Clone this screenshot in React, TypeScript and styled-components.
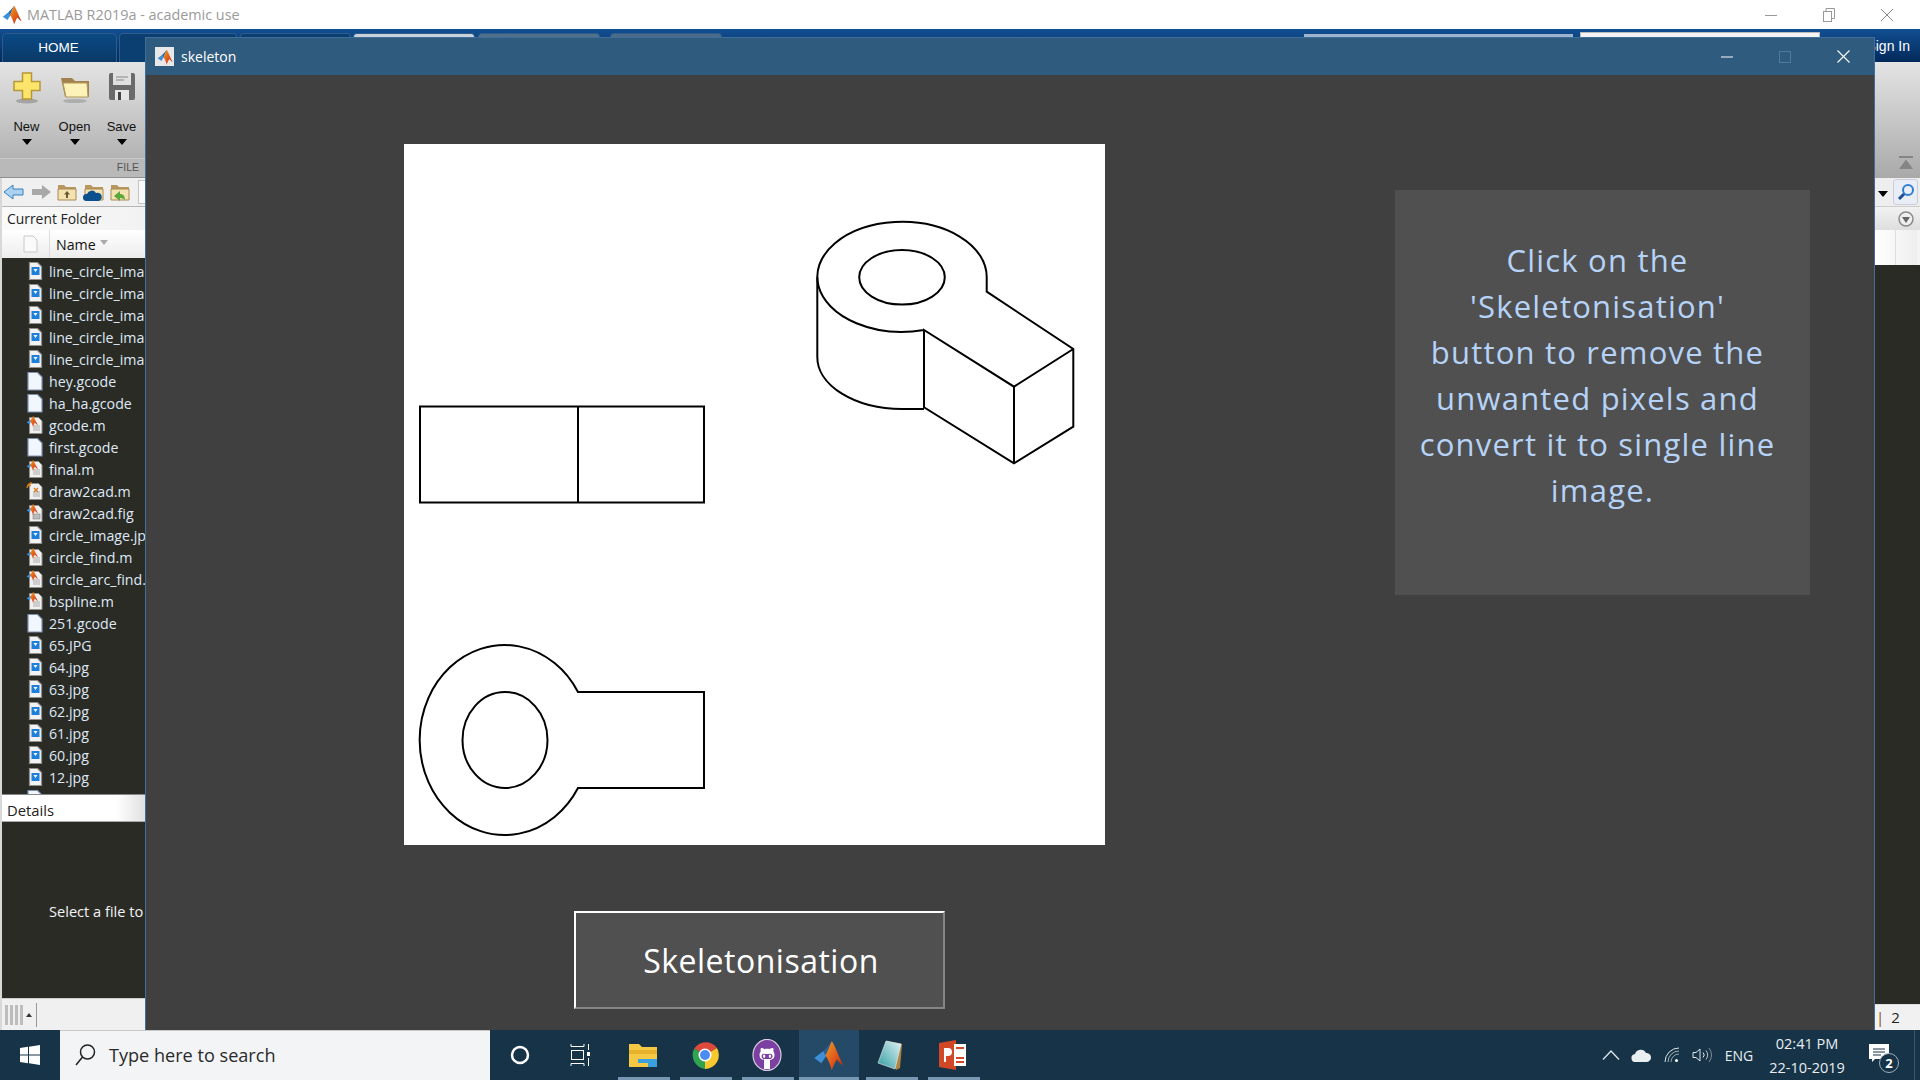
import React from "react";
import styled, { createGlobalStyle } from "styled-components";
import { FaGithubAlt } from "react-icons/fa";

const Global = createGlobalStyle`
  html, body { margin: 0; padding: 0; background: #fff; overflow: hidden; }
  * { box-sizing: border-box; }
`;
const ui = `"Open Sans", "Noto Sans", sans-serif`;
const arial = `"Liberation Sans", Arial, sans-serif`;
const comic = `"Open Sans", "DejaVu Sans", sans-serif`;

const Desktop = styled.div`position: relative; width: 1920px; height: 1080px; overflow: hidden; display: flex; flex-direction: column;`;
const MatlabWindow = styled.div`height: 1030px; display: flex; flex-direction: column; background: #f0f0f0;`;
const TitleBar = styled.div`height: 29px; background: #fff; display: flex; align-items: center; padding: 0 4px 0 2px; font: 14.4px ${ui}; color: #9a9a9a;`;
const TitleText = styled.span`margin-left: 5px; flex: 1; margin-top: -1px;`;
const Ctl = styled.div`width: 58px; height: 29px; display: flex; align-items: center; justify-content: center;`;
const TabStrip = styled.div`height: 33px; background: linear-gradient(#124f92, #03295a); display: flex; align-items: flex-end; padding-left: 2px; overflow: hidden;`;
const HomeTab = styled.div`width: 115px; height: 29px; border-radius: 5px 5px 0 0; background: linear-gradient(#0b4a85, #0a3966); border: 1px solid #2c5d8c; border-bottom: 0; color: #fff; font: 13.5px ${arial}; display: flex; align-items: center; justify-content: center; padding: 0 2px 2px 0;`;
const BackTab = styled.div<{ $w: number; $c: string; $ml: number }>`width: ${p => p.$w}px; margin-left: ${p => p.$ml}px; height: 29px; border-radius: 4px 4px 0 0; background: ${p => p.$c}; border: 1px solid #2c5d8c; border-bottom: 0;`;
const QuickBar = styled.div`width: 269px; margin-left: 582px; height: 28px; background: linear-gradient(#9db5cf, #86a5c4); align-self: flex-end;`;
const SearchBox = styled.div`width: 240px; margin-left: 7px; height: 30px; background: #f4f4f4; border: 1px solid #bbb; align-self: flex-end;`;
const SignIn = styled.div`flex: 1; color: #fff; font: 14px ${arial}; align-self: center; text-align: right; padding-right: 10px; padding-top: 1px;`;
const Ribbon = styled.div`height: 116px; background: linear-gradient(#e4e4e4, #a9a9a9); display: flex; justify-content: space-between;`;
const FileGroup = styled.div`width: 145px; display: flex; flex-direction: column;`;
const Tools = styled.div`height: 96px; display: flex; padding-left: 3px;`;
const Tool = styled.div<{ $nudge?: number }>`width: 48px; margin-left: ${p => p.$nudge ?? 0}px; display: flex; flex-direction: column; align-items: center; font: 13px ${arial}; color: #111;`;
const ToolIcon = styled.div`height: 36px; width: 36px; margin-top: 8px; display: flex; align-items: center; justify-content: center; flex: none;`;
const ToolLabel = styled.div`margin-top: 12px; line-height: 18px;`;
const DownArrow = styled.div`width: 0; height: 0; margin-top: 3px; border: 5px solid transparent; border-top: 6px solid #000; border-bottom: 0;`;
const GroupStrip = styled.div`height: 20px; background: #b9b9b9; border-top: 1px solid #c8c8c8; border-bottom: 1px solid #8f8f8f; text-align: right; padding-right: 6px; font: 10.5px/17px ${arial}; color: #555;`;
const Collapse = styled.div`width: 45px; padding-top: 94px; padding-left: 24px;`;
const Panes = styled.div`flex: 1; display: flex; justify-content: space-between; min-height: 0;`;
const LeftPane = styled.div`width: 145px; display: flex; flex-direction: column; border-left: 2px solid #d8d8d8; overflow: hidden;`;
const NavRow = styled.div`height: 29px; flex: none; display: flex; align-items: center; gap: 4.500px; padding-left: 1px; background: #f0f0f0; border-bottom: 1px solid #b5b5b5;`;
const AddressStub = styled.div`flex: 1; height: 24px; margin-left: 2px; background: #fafafa; border: 1px solid #c4c4c4; border-right: 0;`;
const PaneHeader = styled.div`height: 23px; flex: none; background: linear-gradient(90deg, #fafafa, #f2f2f2); font: 13.900px/23px ${ui}; color: #222; padding-left: 5px; white-space: nowrap;`;
const ColumnRow = styled.div`height: 28px; flex: none; background: linear-gradient(#fff, #ececec); display: flex; align-items: center; font: 14.200px ${ui}; color: #111; white-space: nowrap;`;
const ColCheck = styled.div`width: 48px; height: 100%; border-right: 1px solid #ddd; display: flex; align-items: center; justify-content: center; margin-right: 6px; padding-left: 10px;`;
const SortMark = styled.span`display: inline-block; margin-left: 4px; width: 0; height: 0; border: 4.500px solid transparent; border-top: 5px solid #aaa; border-bottom: 0; position: relative; top: -2px;`;
const FileList = styled.div`height: 537px; flex: none; background: #2b2b26; overflow: hidden; border-bottom: 1px solid #888; padding-top: 2px;`;
const FileRow = styled.div`height: 22px; display: flex; align-items: center; padding-left: 23px; gap: 4px; white-space: nowrap; font: 14.200px ${ui}; color: #dfe9f5;`;
const FileSlot = styled.span`flex: none; width: 20px; height: 20px; display: block;`;
const DetailsHead = styled.div`height: 27px; flex: none; background: linear-gradient(90deg, #fff 80%, #e0e0e0); border-bottom: 1px solid #aaa; font: 14.800px/27px ${ui}; color: #222; padding: 2px 0 0 5px;`;
const DetailsBody = styled.div`height: 176px; flex: none; background: #2b2b26; color: #f4f4f4; font: 14.600px ${ui}; white-space: nowrap; padding: 79px 0 0 47px;`;
const StatusLeft = styled.div`flex: 1; background: #f0f0f0; display: flex; align-items: center; padding: 0 0 0 3px; gap: 3px; border-top: 1px solid #ccc;`;
const StatusDivider = styled.div`width: 1px; height: 24px; background: #999; margin-left: 1px;`;
const RightPane = styled.div`width: 45px; display: flex; flex-direction: column;`;
const RightNav = styled.div`height: 29px; flex: none; display: flex; align-items: center; background: #eee; padding-left: 3px; gap: 5px; border-bottom: 1px solid #ccc;`;
const SearchBtn = styled.div`width: 25px; height: 26px; border: 1px solid #ccd; border-radius: 3px; background: #e8edf6; display: flex; align-items: center; justify-content: center;`;
const RightHead = styled.div`height: 23px; flex: none; background: linear-gradient(#f2f2f2, #dedede); display: flex; align-items: center; padding-left: 23px;`;
const RightCols = styled.div`height: 35px; flex: none; background: linear-gradient(90deg, #fff, #eee); border-right: 3px solid #f4f4f4; display: flex; padding-left: 20px;`;
const RightColLine = styled.div`width: 1px; background: #ddd;`;
const RightDark = styled.div`flex: 1; background: #2b2b26;`;
const RightStatus = styled.div`height: 26px; flex: none; background: #f1f1f1; border-top: 1px solid #ddd; font: 15px/25px ${ui}; color: #222; display: flex; gap: 7px; padding-left: 1px;`;
const Cursor = styled.span`color: #8a4b12;`;

const FigureWindow = styled.div`position: absolute; left: 145px; top: 37px; width: 1730px; height: 993px; display: flex; flex-direction: column; border: 1px solid #3f6f99; border-bottom: 0; background: #404040;`;
const FigureBar = styled.div`height: 37px; flex: none; background: #2f5b7e; display: flex; align-items: center; padding: 0 2px 0 9px; color: #fff; font: 14px ${ui};`;
const FigIconBox = styled.div`width: 19px; height: 19px; background: #e8e8e8; display: flex; align-items: center; justify-content: center; margin-right: 7px;`;
const FigTitle = styled.div`flex: 1; margin-top: -1px;`;
const FigCtl = styled.div`width: 58px; height: 37px; display: flex; align-items: center; justify-content: center; margin-left: 0;`;
const FigureBody = styled.div`flex: 1; display: flex; padding-left: 258px;`;
const LeftColumn = styled.div`width: 701px; display: flex; flex-direction: column; padding-top: 69px;`;
const Canvas = styled.div`width: 701px; height: 701px; background: #fff; flex: none;`;
const ActionButton = styled.button`width: 371px; height: 98px; margin: 66px 0 0 170px; background: #505050; border: 2px solid; border-color: #fff #858585 #858585 #fff; color: #fff; font: 32px ${comic}; letter-spacing: .5px; padding: 0 0 0 3px;`;
const InfoPanel = styled.div`width: 415px; height: 405px; margin: 115px 0 0 290px; background: #505050; color: #b6d3f7; font: 31px/46px ${comic}; letter-spacing: 1.200px; padding-top: 47px; text-align: center;`;
const InfoLine = styled.div<{ $shift?: boolean }>`padding-right: ${p => (p.$shift ? 10 : 0)}px; white-space: nowrap;`;

const Taskbar = styled.div`height: 50px; background: #163347; display: flex; align-items: stretch; color: #fff;`;
const StartBtn = styled.div`width: 60px; display: flex; align-items: center; justify-content: center;`;
const TaskSearch = styled.div`width: 430px; background: #f3f4f6; border-top: 1px solid #c8c8c8; display: flex; align-items: center; padding: 0 0 2px 14px; gap: 13px; font: 18.100px ${ui}; color: #2a2a2a;`;
const TaskGlyph = styled.div`width: 60px; display: flex; align-items: center; justify-content: center;`;
const TaskApps = styled.div`display: flex; gap: 10px; margin-left: 8px;`;
const TaskApp = styled.div<{ $active?: boolean }>`width: ${p => (p.$active ? 60 : 52)}px; margin: ${p => (p.$active ? "0 -3px 0 -5px" : "0")}; background: ${p => (p.$active ? "#244a68" : "transparent")}; border-bottom: 3px solid #7797b3; display: flex; align-items: center; justify-content: center; padding: 3px 2px 0 0;`;
const Tray = styled.div`margin-left: auto; display: flex; align-items: center; font-family: ${ui};`;
const TraySlot = styled.div<{ $w: number }>`width: ${p => p.$w}px; height: 100%; display: flex; align-items: center; justify-content: center;`;
const TrayText = styled.div`width: 46px; text-align: center; font-size: 14px; color: #e8eef2;`;
const Clock = styled.div`width: 80px; margin-left: 5px; text-align: center; font-size: 14.500px; line-height: 24px; color: #e8eef2; padding-top: 1px; white-space: nowrap;`;
const Notif = styled.div`position: relative; width: 52px; height: 100%; display: flex; align-items: center; justify-content: center; margin: 0 3px 0 12px; padding: 0 12px 4px 0;`;
const NotifBadge = styled.div`position: absolute; left: 20px; top: 23px; width: 20px; height: 20px; border-radius: 50%; background: #163347; border: 1px solid #9db0bd; color: #fff; font: 700 13px/18px ${ui}; text-align: center;`;
const EndLine = styled.div`width: 1px; height: 100%; background: #3c5668; margin-right: 5px;`;

const Logo = ({ s = 22 }: { s?: number }) => (
  <svg width={s} height={s} viewBox="0 0 24 24">
    <defs>
      <linearGradient id="mlPeak" x1="0" y1="0" x2="1" y2="1">
        <stop offset="0" stopColor="#e8a020" />
        <stop offset=".55" stopColor="#e0571c" />
        <stop offset="1" stopColor="#a81e10" />
      </linearGradient>
    </defs>
    <path d="M1 14 8 8.500 11 11 6.500 18Z" fill="#3d8fd8" />
    <path d="M8 8.500 11 5.500C12.500 4 13 2.500 14.500 1 13 4 11.500 9 9.500 12Z" fill="#2b5f96" />
    <path d="M14.500 1C16.500 3 19 11 23.500 19.500 21.500 18.500 19.500 16.500 18.500 15 16.500 18 15.500 21 14.500 23.500 13.500 19 11.500 14.500 9.500 12 11.500 9 13 4 14.500 1Z" fill="url(#mlPeak)" />
  </svg>
);

const PageBase = ({ fill = "#f2f2f2", stroke = "#8f8f8f" }: { fill?: string; stroke?: string }) => (
  <path d="M4.500 1.500h8l4 4v13h-12z" fill={fill} stroke={stroke} strokeWidth="1.200" />
);
const ImageFile = () => (
  <svg width="20" height="20" viewBox="0 0 20 20">
    <PageBase />
    <rect x="6.500" y="6" width="8" height="8" fill="#1d7fdc" />
    <path d="M8.500 8h4l-2 3z" fill="#fff" />
  </svg>
);
const PlainFile = () => (
  <svg width="20" height="20" viewBox="0 0 20 20">
    <path d="M3 1.500h9.500l4.500 4.500v13H3z" fill="#f2f6fd" stroke="#7f92b5" strokeWidth="1.200" />
  </svg>
);
const CodeFile = ({ kind }: { kind: "m" | "fx" | "fig" }) => (
  <svg width="20" height="20" viewBox="0 0 20 20">
    <path d="M4.500 2.500h9l3.500 3.500v12.500h-12.500z" fill="#f0f0f0" stroke="#8f8f8f" />
    {kind !== "fig" && <path d="M8 11h7M8 13h7M8 15h7" stroke="#aaa" />}
    {kind === "fig" && <rect x="8" y="11" width="7" height="5" fill="#bbb" stroke="#888" strokeWidth=".6" />}
    {kind === "fx" ? (
      <>
        <path d="M2 7q1-5 5-5M2 4.500h4" stroke="#d97a1c" strokeWidth="1.300" fill="none" />
        <path d="M9 7l4 4m0-4l-4 4" stroke="#d97a1c" strokeWidth="1.300" />
      </>
    ) : (
      <>
        <path d="M1.500 7.500 5 5l1.500 1-2 3z" fill="#3d8fd8" />
        <path d="M8 1c1 1 2.500 5 5 9-1.500-.5-2.500-1.500-3-2.500C9 9 8.500 10 8 12 7.500 9.500 6.500 7.500 5 6c1.500-1.500 2-3.500 3-5z" fill="url(#mlPeak)" />
      </>
    )}
  </svg>
);

type FileKind = "img" | "plain" | "m" | "fx" | "fig";
const files: [FileKind, string][] = [
  ["img", "line_circle_ima"], ["img", "line_circle_ima"], ["img", "line_circle_ima"],
  ["img", "line_circle_ima"], ["img", "line_circle_ima"], ["plain", "hey.gcode"],
  ["plain", "ha_ha.gcode"], ["m", "gcode.m"], ["plain", "first.gcode"], ["m", "final.m"], ["fx", "draw2cad.m"],
  ["fig", "draw2cad.fig"], ["img", "circle_image.jp"], ["m", "circle_find.m"], ["m", "circle_arc_find."],
  ["m", "bspline.m"], ["plain", "251.gcode"], ["img", "65.JPG"], ["img", "64.jpg"], ["img", "63.jpg"],
  ["img", "62.jpg"], ["img", "61.jpg"], ["img", "60.jpg"], ["img", "12.jpg"], ["plain", "7.gcode"],
];
const FileGlyph = ({ kind }: { kind: FileKind }) => {
  if (kind === "img") return <ImageFile />;
  if (kind === "plain") return <PlainFile />;
  return <CodeFile kind={kind} />;
};

const FolderSmall = ({ badge }: { badge?: "up" | "cloud" | "back" }) => (
  <svg width="22" height="22" viewBox="0 0 22 22">
    <path d="M2 4h6l2 2h10v13H2z" fill="#b9985f" />
    <path d="M2 8h18v11H2z" fill="#f4e3b0" stroke="#a88a55" />
    {badge === "up" && <path d="M11 10l-3 3.500h2V17h2v-3.500h2z" fill="#6b5a30" />}
    {badge === "cloud" && <path d="M3 20a3.500 3.500 0 0 1 1-7 5 5 0 0 1 9-1 4 4 0 0 1 3 8z" fill="#0b4f8f" />}
    {badge === "back" && <path d="M11 10l-6 5 6 5v-3c3 0 4 1 5 2 0-4-2-6-5-6z" fill="#5aa83c" />}
  </svg>
);

const Drawing = () => (
  <svg width="701" height="701" viewBox="0 -.5 701 701" fill="none" stroke="#000" strokeWidth="2">
    <rect x="16" y="262" width="284" height="96" />
    <path d="M174 262V358" />
    <path d="M174 547.500A85 95 0 1 0 174 643.500H300V547.500Z" />
    <ellipse cx="101" cy="595.500" rx="42.500" ry="48" />
    <path d="M520 185.500A84.700 55 0 1 1 582.700 132.800V147.200L669.300 204.500V282.200L610 318.800 520 262.800V185.500L610 242.200 669.300 204.500" />
    <path d="M610 242.200V318.800" />
    <path d="M413.300 132.800V212.200A84.700 52 0 0 0 498 264.500H520" />
    <ellipse cx="498" cy="132.800" rx="42.800" ry="27.300" />
  </svg>
);

export default function App() {
  return (
    <Desktop>
      <Global />
      <MatlabWindow>
        <TitleBar>
          <Logo s={20} />
          <TitleText>MATLAB R2019a - academic use</TitleText>
          <Ctl>
            <svg width="12" height="12" viewBox="0 0 12 12"><path d="M0 6.500h12" stroke="#999" /></svg>
          </Ctl>
          <Ctl>
            <svg width="12" height="14" viewBox="0 0 12 14" fill="none" stroke="#999"><rect x=".5" y="3.500" width="8" height="10" /><path d="M3 3.500V.5h8.500v10H9" /></svg>
          </Ctl>
          <Ctl>
            <svg width="14" height="14" viewBox="0 0 14 14"><path d="M1 1l12 12M13 1L1 13" stroke="#888" /></svg>
          </Ctl>
        </TitleBar>
        <TabStrip>
          <HomeTab>HOME</HomeTab>
          <BackTab $w={118} $ml={2} $c="#0b3f72" />
          <BackTab $w={111} $ml={3} $c="#0b3f72" />
          <BackTab $w={122} $ml={2} $c="#c9d2da" />
          <BackTab $w={122} $ml={3} $c="#51708c" />
          <BackTab $w={112} $ml={10} $c="#4c6b88" />
          <QuickBar />
          <SearchBox />
          <SignIn>Sign In</SignIn>
        </TabStrip>
        <Ribbon>
          <FileGroup>
            <Tools>
              <Tool>
                <ToolIcon>
                  <svg width="32" height="36" viewBox="0 0 32 36">
                    <ellipse cx="16" cy="31" rx="11" ry="2.500" fill="#777" opacity=".5" />
                    <path d="M11.500 3h9v8.500H29v9h-8.500V29h-9v-8.500H3v-9h8.500z" fill="#fbe56a" stroke="#b8963a" strokeWidth="1.500" />
                  </svg>
                </ToolIcon>
                <ToolLabel>New</ToolLabel>
                <DownArrow />
              </Tool>
              <Tool $nudge={1}>
                <ToolIcon>
                  <svg width="32" height="36" viewBox="0 0 32 36">
                    <ellipse cx="16" cy="31" rx="12" ry="2" fill="#777" opacity=".4" />
                    <path d="M2 8h11l3 3h14v16H6z" fill="#a3814f" />
                    <path d="M4 13h24l1 14H7z" fill="#fdf3b8" stroke="#b09a5c" />
                  </svg>
                </ToolIcon>
                <ToolLabel>Open</ToolLabel>
                <DownArrow />
              </Tool>
              <Tool>
                <ToolIcon>
                  <svg width="30" height="36" viewBox="0 0 30 36">
                    <rect x="2" y="3" width="26" height="27" rx="2" fill="#6a6a6a" />
                    <rect x="6" y="3" width="18" height="12" fill="#e0e0e0" />
                    <path d="M9 7h12M9 10h8" stroke="#888" />
                    <rect x="8" y="20" width="14" height="10" fill="#e6e6e6" />
                    <rect x="11" y="22" width="3" height="8" fill="#444" />
                  </svg>
                </ToolIcon>
                <ToolLabel>Save</ToolLabel>
                <DownArrow />
              </Tool>
            </Tools>
            <GroupStrip>FILE</GroupStrip>
          </FileGroup>
          <Collapse>
            <svg width="14" height="14" viewBox="0 0 14 14" fill="#858585"><rect width="14" height="2" /><path d="M7 3.500 14 13H0z" /></svg>
          </Collapse>
        </Ribbon>
        <Panes>
          <LeftPane>
            <NavRow>
              <svg width="22" height="20" viewBox="0 0 22 20"><path d="M1 10 10 3v4h10v6H10v4z" fill="#a9d2f2" stroke="#3e7fb6" /></svg>
              <svg width="22" height="20" viewBox="0 0 22 20"><path d="M21 10 12 3v4H2v6h10v4z" fill="#a8a8a8" /></svg>
              <FolderSmall badge="up" />
              <FolderSmall badge="cloud" />
              <FolderSmall badge="back" />
              <AddressStub />
            </NavRow>
            <PaneHeader>Current Folder</PaneHeader>
            <ColumnRow>
              <ColCheck>
                <svg width="15" height="18" viewBox="0 0 15 18"><path d="M1 1h9l4 4v12H1z" fill="#fafafa" stroke="#c8c8c8" /></svg>
              </ColCheck>
              Name<SortMark />
            </ColumnRow>
            <FileList>
              {files.map(([k, n], i) => (
                <FileRow key={i}>
                  <FileSlot><FileGlyph kind={k} /></FileSlot>
                  {n}
                </FileRow>
              ))}
            </FileList>
            <DetailsHead>Details</DetailsHead>
            <DetailsBody>Select a file to</DetailsBody>
            <StatusLeft>
              <svg width="18" height="20" viewBox="0 0 18 20" fill="#bdbdbd"><path d="M0 0h3v20H0zM5 0h3v20H5zM10 0h3v20h-3zM15 0h3v20h-3z" /></svg>
              <svg width="6" height="4" viewBox="0 0 6 4"><path d="M3 0l3 4H0z" fill="#333" /></svg>
              <StatusDivider />
            </StatusLeft>
          </LeftPane>
          <RightPane>
            <RightNav>
              <DownArrow />
              <SearchBtn>
                <svg width="18" height="18" viewBox="0 0 18 18" fill="none"><circle cx="11" cy="7" r="5" stroke="#2f7fd0" strokeWidth="2" /><path d="M7 11l-5 5" stroke="#1d4f9a" strokeWidth="3" /></svg>
              </SearchBtn>
            </RightNav>
            <RightHead>
              <svg width="16" height="16" viewBox="0 0 16 16"><circle cx="8" cy="8" r="7" fill="#eee" stroke="#8a8a8a" strokeWidth="1.500" /><path d="M4 6h8l-4 6z" fill="#666" /></svg>
            </RightHead>
            <RightCols><RightColLine /></RightCols>
            <RightDark />
            <RightStatus><Cursor>|</Cursor><span>2</span></RightStatus>
          </RightPane>
        </Panes>
      </MatlabWindow>
      <Taskbar>
        <StartBtn>
          <svg width="20" height="20" viewBox="0 0 20 20" fill="#fff"><path d="M0 3l8-1.200V9.500H0zM9 1.700 20 0v9.500H9zM0 10.500h8v7.700L0 17zM9 10.500h11V20L9 18.300z" /></svg>
        </StartBtn>
        <TaskSearch>
          <svg width="22" height="24" viewBox="0 0 22 24" fill="none" stroke="#222" strokeWidth="1.500"><circle cx="13.500" cy="9" r="7" /><path d="M8.500 14 2 22" /></svg>
          Type here to search
        </TaskSearch>
        <TaskGlyph>
          <svg width="20" height="20" viewBox="0 0 20 20" fill="none"><circle cx="10" cy="10" r="8" stroke="#fff" strokeWidth="2.500" /></svg>
        </TaskGlyph>
        <TaskGlyph>
          <svg width="20" height="24" viewBox="0 0 20 24" fill="none" stroke="#fff"><path d="M1 1v2.500h13V1M1 23v-2.500h13V23" /><rect x="1.500" y="7.500" width="12" height="9" /><path d="M18.500 1v6M18.500 15v8" /><rect x="17" y="9" width="3" height="4" fill="#fff" stroke="none" /></svg>
        </TaskGlyph>
        <TaskApps>
          <TaskApp>
            <svg width="30" height="26" viewBox="0 0 30 26"><path d="M1 2h10l3 3h15v20H1z" fill="#f6c944" /><path d="M1 8h28v4H1z" fill="#e8b32c" /><path d="M10 17h19v8H20v-4H10z" fill="#3aa0de" /></svg>
          </TaskApp>
          <TaskApp>
            <svg width="28" height="28" viewBox="0 0 28 28">
              <path d="M14 14 3.200 7.500A14 14 0 0 1 26 7z" fill="#dd4a3c" />
              <path d="M14 14 3.200 7.500A14 14 0 0 0 14 28z" fill="#2fa350" />
              <path d="M14 14 26 7A14 14 0 0 1 14 28z" fill="#f7c92f" />
              <circle cx="14" cy="14" r="6.500" fill="#fff" />
              <circle cx="14" cy="14" r="5" fill="#4c8bf0" />
            </svg>
          </TaskApp>
          <TaskApp>
            <svg width="30" height="32" viewBox="0 0 30 32">
              <ellipse cx="15" cy="16" rx="14" ry="15.500" fill="#7c3fa2" stroke="#d8cfe0" strokeWidth="1.200" />
              <foreignObject x="7" y="7" width="16" height="16"><FaGithubAlt size={16} color="#fff" /></foreignObject>
              <path d="M12 20h6v10h-6z" fill="#fff" />
            </svg>
          </TaskApp>
          <TaskApp $active>
            <Logo s={31} />
          </TaskApp>
          <TaskApp>
            <svg width="28" height="32" viewBox="0 0 28 32">
              <defs><linearGradient id="pad" x1="0" y1="1" x2="1" y2="0"><stop offset="0" stopColor="#2f9c9f" /><stop offset="1" stopColor="#dff3f6" /></linearGradient></defs>
              <path d="M9 2l16 3-2 24-4 2z" fill="#b08440" />
              <path d="M9 2 24 5 18 30 1 24z" fill="url(#pad)" stroke="#eee" strokeWidth=".6" />
            </svg>
          </TaskApp>
          <TaskApp>
            <svg width="28" height="32" viewBox="0 0 28 32">
              <path d="M0 4 17 1v30L0 28z" fill="#d24726" />
              <rect x="15" y="5" width="12" height="22" fill="#fff" />
              <path d="M17 9h8M17 19h8M17 23h8" stroke="#d24726" strokeWidth="2" />
              <path d="M5 23V9h4q4 0 4 4t-4 4H7v6z" fill="#fff" />
            </svg>
          </TaskApp>
        </TaskApps>
        <Tray>
          <TraySlot $w={30}>
            <svg width="18" height="10" viewBox="0 0 18 10" fill="none" stroke="#dfe7ec" strokeWidth="1.300"><path d="M1 9.500 9 1l8 8.500" /></svg>
          </TraySlot>
          <TraySlot $w={30}>
            <svg width="20" height="14" viewBox="0 0 20 14"><path d="M5 14a4 4 0 0 1-1-8 6 6 0 0 1 11-1 4.500 4.500 0 0 1 1 9z" fill="#e9eef1" /></svg>
          </TraySlot>
          <TraySlot $w={31}>
            <svg width="16" height="16" viewBox="0 0 16 16" fill="none" stroke="#dfe7ec"><path d="M1 15A14 14 0 0 1 15 1" /><path d="M4 15A11 11 0 0 1 15 4" opacity=".7" /><path d="M7 15a8 8 0 0 1 8-8" opacity=".6" /><circle cx="12.500" cy="13.500" r="1.500" fill="#fff" stroke="none" /></svg>
          </TraySlot>
          <TraySlot $w={29}>
            <svg width="20" height="16" viewBox="0 0 20 16" fill="none" stroke="#dfe7ec"><path d="M1 5.500h3L8 2v12L4 10.500H1z" /><path d="M11 5.500a3.500 3.500 0 0 1 0 5" /><path d="M14 3.500a7 7 0 0 1 0 9" opacity=".8" /><path d="M17 1a11 11 0 0 1 0 14" opacity=".5" /></svg>
          </TraySlot>
          <TrayText>ENG</TrayText>
          <Clock>02:41 PM<br />22-10-2019</Clock>
          <Notif>
            <svg width="20" height="18" viewBox="0 0 20 18"><path d="M0 0h20v15H6l-3 3v-3H0z" fill="#fff" /><path d="M4 5h12M4 8h12M4 11h8" stroke="#163347" /></svg>
            <NotifBadge>2</NotifBadge>
          </Notif>
          <EndLine />
        </Tray>
      </Taskbar>
      <FigureWindow>
        <FigureBar>
          <FigIconBox><Logo s={16} /></FigIconBox>
          <FigTitle>skeleton</FigTitle>
          <FigCtl>
            <svg width="12" height="2" viewBox="0 0 12 2"><path d="M0 1h12" stroke="#fff" /></svg>
          </FigCtl>
          <FigCtl>
            <svg width="12" height="12" viewBox="0 0 12 12"><rect x=".5" y=".5" width="11" height="11" fill="none" stroke="#4f7a9d" /></svg>
          </FigCtl>
          <FigCtl>
            <svg width="13" height="13" viewBox="0 0 13 13"><path d="M.5.500l12 12M12.500.500l-12 12" stroke="#fff" strokeWidth="1.100" /></svg>
          </FigCtl>
        </FigureBar>
        <FigureBody>
          <LeftColumn>
            <Canvas><Drawing /></Canvas>
            <ActionButton>Skeletonisation</ActionButton>
          </LeftColumn>
          <InfoPanel>
            <InfoLine $shift>Click on the</InfoLine>
            <InfoLine $shift>'Skeletonisation'</InfoLine>
            <InfoLine $shift>button to remove the</InfoLine>
            <InfoLine $shift>unwanted pixels and</InfoLine>
            <InfoLine $shift>convert it to single line</InfoLine>
            <InfoLine>image.</InfoLine>
          </InfoPanel>
        </FigureBody>
      </FigureWindow>
    </Desktop>
  );
}
